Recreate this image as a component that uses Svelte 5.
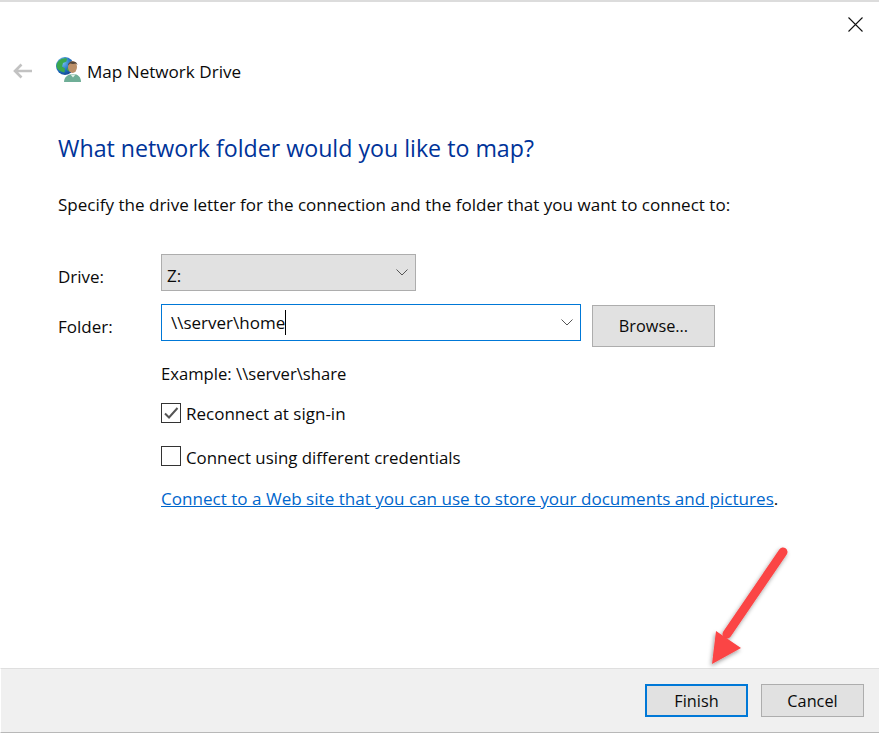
<script>
  let drive = "Z:";
</script>

<div class="wizard">
  <div class="close-row">
    <svg class="close" width="15" height="15" viewBox="0 0 15 15"><path d="M.5.5l14 14M14.500.5l-14 14" stroke="#111" stroke-width="1.100" fill="none" /></svg>
  </div>
  <header class="title-row">
    <svg class="back" width="20" height="16" viewBox="0 0 20 16"><path d="M20 8H3M9.500 1.500 3 8l6.500 6.500" stroke="#c2c2c2" stroke-width="2.600" fill="none" /></svg>
    <svg class="app-icon" width="25" height="25" viewBox="0 0 25 25">
      <defs>
        <radialGradient id="globe" cx="0.35" cy="0.3" r="0.8">
          <stop offset="0" stop-color="#7cc6f2" />
          <stop offset="0.6" stop-color="#1c6cc0" />
          <stop offset="1" stop-color="#123f86" />
        </radialGradient>
      </defs>
      <path d="M8 25c0-5 4-8 9-8s8 3 8 8z" fill="#6fae97" />
      <path d="M14.500 17.500l2.500 3 2.500-3z" fill="#dff1e8" />
      <circle cx="9" cy="9" r="9" fill="url(#globe)" />
      <path d="M3 3.500C6 1 9 .8 11 1.500l-.5 3-3.500 1.500-1 3.500 3 2-.5 4C5 15 1 13 .5 9 .5 7 1.500 5 3 3.500zM12 10l2 1.500-1.500 3-1.500-2z" fill="#3aa84e" />
      <ellipse cx="16.500" cy="10" rx="4.500" ry="6" fill="#bb9069" />
      <path d="M12 8.500c0-5 9-5.500 9.500-.5l-1.500-1.500-3 .5-3-.5z" fill="#54463a" />
    </svg>
    <span class="title">Map Network Drive</span>
  </header>

  <main class="content">
    <h1>What network folder would you like to map?</h1>
    <p class="intro">Specify the drive letter for the connection and the folder that you want to connect to:</p>

    <div class="form">
      <span class="label">Drive:</span>
      <div class="select">
        <span class="z">{drive}</span>
        <svg width="12" height="7" viewBox="0 0 12 7"><path d="M.5.500 6 6 11.500.500" stroke="#555" fill="none" /></svg>
      </div>

      <span class="label folder-label">Folder:</span>
      <div class="folder-line">
        <div class="combo">
          <span class="value">\\server\home</span><span class="caret"></span>
          <svg width="12" height="7" viewBox="0 0 12 7"><path d="M.5.500 6 6 11.500.500" stroke="#555" fill="none" /></svg>
        </div>
        <button class="btn browse">Browse...</button>
      </div>

      <div class="options">
        <div class="example">Example: \\server\share</div>
        <label class="check first">
          <span class="box">
            <svg width="16" height="14" viewBox="0 0 16 14"><path d="M2 7.500 6 11.500 14.500 2" stroke="#555" stroke-width="2" fill="none" /></svg>
          </span>
          Reconnect at sign-in
        </label>
        <label class="check creds">
          <span class="box"></span>
          Connect using different credentials
        </label>
        <div class="link-line"><span class="link">Connect to a Web site that you can use to store your documents and pictures</span>.</div>
      </div>
    </div>
  </main>

  <footer class="actions">
    <button class="btn primary">Finish</button>
    <button class="btn">Cancel</button>
  </footer>

  <svg class="arrow" width="100" height="130" viewBox="0 0 100 130">
    <defs>
      <filter id="sh" x="-30%" y="-30%" width="160%" height="160%">
        <feDropShadow dx="-1" dy="2" stdDeviation="2" flood-color="#000" flood-opacity="0.4" />
      </filter>
    </defs>
    <g filter="url(#sh)">
      <path d="M83 10 27 92" stroke="#fb4444" stroke-width="9" stroke-linecap="round" fill="none" />
      <path d="M12 122 16 89 41 106z" fill="#fb4444" />
    </g>
  </svg>
</div>

<style>
  :global(body) {
    margin: 0;
    background: #fff;
  }

  .wizard {
    position: relative;
    width: 879px;
    height: 733px;
    box-sizing: border-box;
    border-top: 2px solid #dcdcdc;
    display: flex;
    flex-direction: column;
    overflow: hidden;
    font-family: "Open Sans", "Noto Sans", sans-serif;
    font-size: 17px;
    color: #0a0a0a;
  }

  .close-row {
    display: flex;
    justify-content: flex-end;
    padding: 15px 16px 0 0;
    height: 25px;
    box-sizing: content-box;
  }

  .title-row {
    display: flex;
    align-items: center;
    height: 30px;
    padding: 14px 0 0 12px;
  }

  .back {
    margin-right: 24px;
  }

  .app-icon {
    margin-right: 6px;
    margin-top: -4px;
  }

  .title {
    font-size: 17.100px;
  }

  .content {
    flex: 1;
    padding: 0 0 0 58px;
  }

  h1 {
    margin: 46px 0 0;
    font-size: 23.200px;
    font-weight: 400;
    line-height: 32px;
    color: #003399;
  }

  .intro {
    margin: 29px 0 0;
    line-height: 24px;
    font-size: 17.050px;
  }

  .form {
    display: grid;
    grid-template-columns: 103px 1fr;
    margin-top: 37px;
    row-gap: 13px;
    align-items: center;
  }

  .label {
    line-height: 24px;
    padding-top: 8px;
  }

  .folder-label {
    align-self: start;
    padding-top: 3px;
    line-height: 40px;
  }

  .select {
    width: 255px;
    height: 37px;
    box-sizing: border-box;
    border: 1px solid #adadad;
    background: #e1e1e1;
    display: flex;
    align-items: center;
    justify-content: space-between;
    padding: 0 7px 0 5px;
  }

  .z {
    padding-top: 5px;
  }

  .folder-line {
    display: flex;
    align-items: flex-start;
    gap: 11px;
  }

  .combo {
    width: 420px;
    height: 37px;
    box-sizing: border-box;
    border: 1px solid #0078d7;
    display: flex;
    align-items: center;
    padding: 0 7px 0 9px;
  }

  .caret {
    width: 1px;
    height: 25px;
    background: #000;
    margin-right: auto;
  }

  .btn {
    font: inherit;
    font-size: 16.300px;
    color: inherit;
    background: #e1e1e1;
    border: 1px solid #adadad;
    border-radius: 0;
    padding: 0;
  }

  .browse {
    width: 123px;
    height: 42px;
    margin-top: 1px;
  }

  .options {
    grid-column: 2;
    margin-top: 2px;
  }

  .example {
    line-height: 24px;
    font-size: 16.650px;
  }

  .check {
    display: flex;
    align-items: flex-start;
    gap: 5px;
    line-height: 24px;
    margin-top: 20px;
  }

  .check.first {
    margin-top: 16px;
  }

  .first .box {
    margin-top: 1px;
  }

  .creds {
    font-size: 16.850px;
  }

  .box {
    width: 20px;
    height: 20px;
    box-sizing: border-box;
    border: 1px solid #333;
    display: flex;
    align-items: center;
    justify-content: center;
  }

  .link-line {
    margin-top: 17px;
    line-height: 24px;
    font-size: 17.070px;
  }

  .link {
    color: #0066cc;
    text-decoration: underline;
  }

  .actions {
    height: 65px;
    box-sizing: border-box;
    border-top: 1px solid #dfdfdf;
    border-bottom: 1px solid #b8b8b8;
    border-left: 1px solid #fff;
    background: #f0f0f0;
    display: flex;
    justify-content: flex-end;
    align-items: center;
    gap: 13px;
    padding: 0 15px 0 0;
  }

  .actions .btn {
    width: 103px;
    height: 33px;
  }

  .actions .primary {
    border: 2px solid #0078d7;
  }

  .arrow {
    position: absolute;
    left: 700px;
    top: 540px;
  }
</style>
